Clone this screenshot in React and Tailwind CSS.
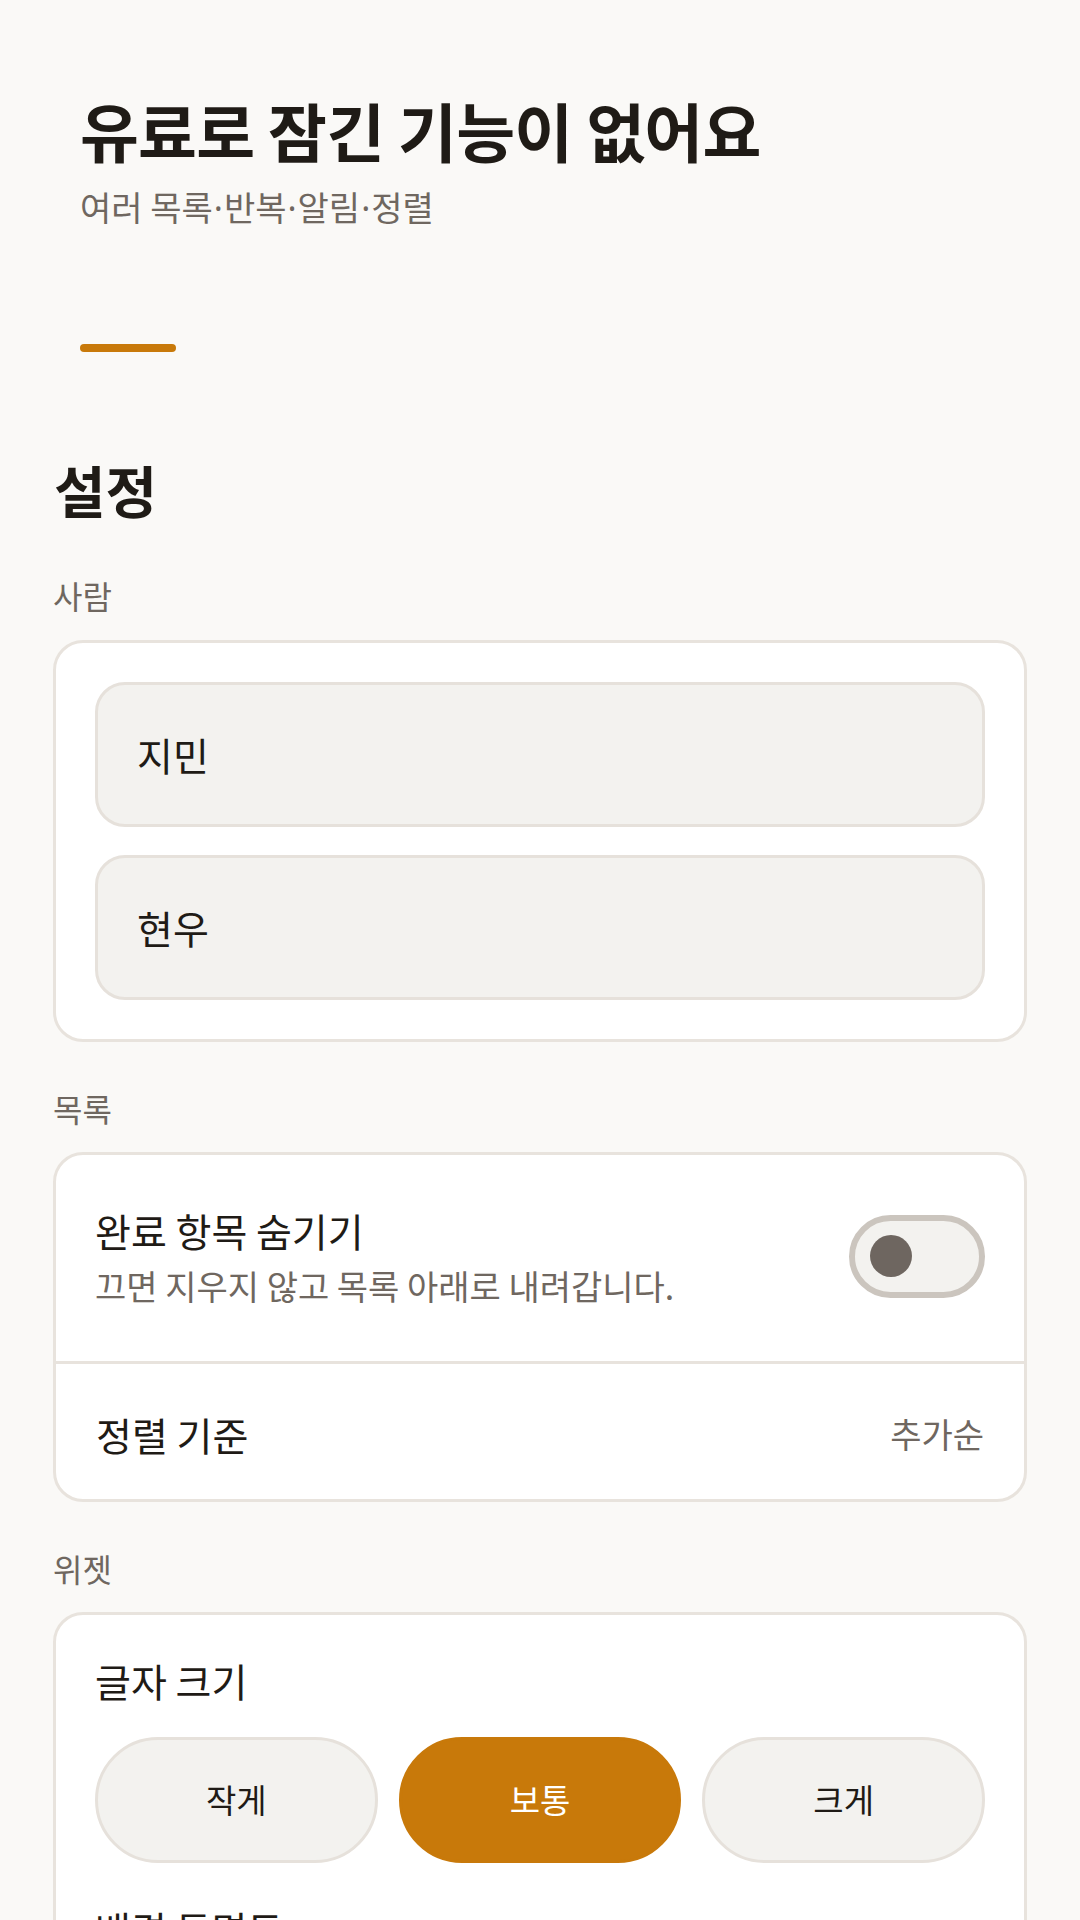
export default function App() {
  const font = "font-['Noto_Sans_CJK_KR','Noto_Sans',sans-serif]";
  const Dot = () => <span className="mx-[1px] font-['Noto_Sans','Liberation_Sans',sans-serif] leading-none">·</span>;
  return (
    <div className={`min-h-screen bg-[#faf9f7] text-[#1f1b16] ${font}`}>
      <header className="pl-[80px] pt-[91px]">
        <h1 className="text-[64px] font-bold leading-[77px] tracking-[-0.012em]">유료로 잠긴 기능이 없어요</h1>
        <p className="mt-[19px] h-[40px] text-[34px] leading-[40px] text-[#6f6760]">
          여러 목록<Dot />반복<Dot />알림<Dot />정렬
        </p>
        <div className="mt-[117px] h-[8px] w-[96px] rounded-full bg-[#c8790a]" />
      </header>

      <main className="px-[53px] pt-[106px] pb-[60px]">
        <h2 className="text-[56px] font-bold leading-[62px] pl-[1px]">설정</h2>

        <section>
          <div className="mt-[55px] mb-[25px] text-[32px] leading-[40px] text-[#6f6760]">사람</div>
          <div className="rounded-[30px] border-[3px] border-[#e8e3dd] bg-white p-[39px] flex flex-col gap-[28px]">
            {["지민", "현우"].map((name) => (
              <div
                key={name}
                className="h-[145px] rounded-[30px] border-[3px] border-[#e6e1db] bg-[#f3f2ef] flex items-center px-[39px] text-[39px]"
              >
                {name}
              </div>
            ))}
          </div>
        </section>

        <section>
          <div className="mt-[46px] mb-[24px] text-[32px] leading-[40px] text-[#6f6760]">목록</div>
          <div className="rounded-[30px] border-[3px] border-[#e8e3dd] bg-white">
            <div className="flex items-center justify-between px-[39px] h-[206px]">
              <div className="pb-[4px]">
                <div className="text-[39px] leading-[48px]">완료 항목 숨기기</div>
                <div className="mt-[11px] text-[34px] leading-[42px] text-[#6f6760]">끄면 지우지 않고 목록 아래로 내려갑니다.</div>
              </div>
              <div className="h-[83px] w-[136px] shrink-0 rounded-full border-[6px] border-[#cbc5be] bg-[#f3f2ef] flex items-center pl-[15px] mb-[4px]">
                <div className="h-[42px] w-[42px] rounded-full bg-[#6e6660]" />
              </div>
            </div>
            <div className="h-[3px] bg-[#e8e3dd]" />
            <div className="flex items-center justify-between px-[40px] pt-[46px] pb-[41px]">
              <div className="text-[39px] leading-[48px]">정렬 기준</div>
              <div className="text-[34px] leading-[48px] text-[#6f6760]">추가순</div>
            </div>
          </div>
        </section>

        <section>
          <div className="mt-[46px] mb-[24px] text-[32px] leading-[40px] text-[#6f6760]">위젯</div>
          <div className="rounded-[30px] border-[3px] border-[#e8e3dd] bg-white px-[39px] pt-[41px] pb-[40px]">
            <div className="text-[39px] leading-[48px]">글자 크기</div>
            <div className="mt-[33px] grid grid-cols-3 gap-[21px]">
              <button className="h-[126px] rounded-full border-[3px] border-[#e6e1db] bg-[#f3f2ef] text-[33px] text-[#1f1b16]">작게</button>
              <button className="h-[126px] rounded-full border-[3px] border-[#c8790a] bg-[#c8790a] text-[33px] text-white">보통</button>
              <button className="h-[126px] rounded-full border-[3px] border-[#e6e1db] bg-[#f3f2ef] text-[33px] text-[#1f1b16]">크게</button>
            </div>
            <div className="mt-[41px] text-[39px] leading-[48px]">배경 투명도</div>
            <div className="mt-[31px] grid grid-cols-3 gap-[21px]">
              <button className="h-[126px] rounded-full border-[3px] border-[#e6e1db] bg-[#f3f2ef] text-[33px]">없음</button>
              <button className="h-[126px] rounded-full border-[3px] border-[#e6e1db] bg-[#f3f2ef] text-[33px]">중간</button>
              <button className="h-[126px] rounded-full border-[3px] border-[#e6e1db] bg-[#f3f2ef] text-[33px]">진하게</button>
            </div>
          </div>
        </section>
      </main>
    </div>
  );
}
